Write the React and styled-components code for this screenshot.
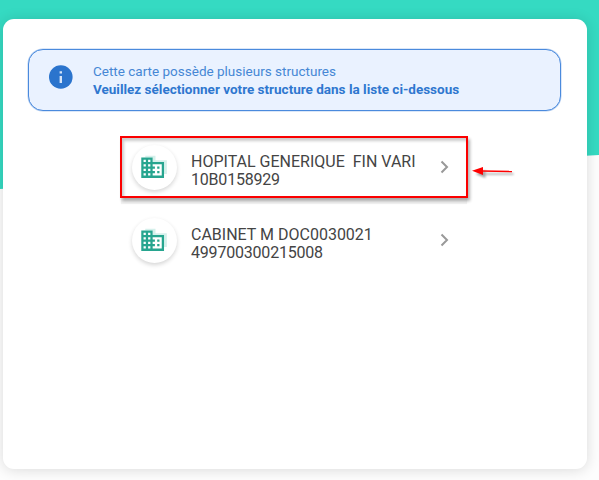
import React from "react";
import styled, { createGlobalStyle } from "styled-components";

const GlobalStyle = createGlobalStyle`
  * { box-sizing: border-box; }
  body { margin: 0; overflow: hidden; font-family: Roboto, "Liberation Sans", sans-serif; }
`;

const Page = styled.main`
  display: grid;
  width: 599px;
  height: 480px;
  overflow: hidden;
  background: #fdfdfd;
`;

const Backdrop = styled.div`
  grid-area: 1 / 1;
  height: 190px;
  background: #35dac2;
  clip-path: polygon(0 0, 100% 0, 100% 155px, 0 189px);
`;

const Card = styled.section`
  grid-area: 1 / 1;
  position: relative;
  width: 584px;
  height: 450px;
  margin: 19px 0 0 3px;
  padding: 30px 25px;
  border-radius: 11px;
  background: #fff;
  box-shadow: 0 1px 14px rgba(0, 0, 0, 0.14);
`;

const Notice = styled.div`
  display: flex;
  width: 532.5px;
  height: 62px;
  margin-left: 0.4px;
  padding: 13px 18.6px;
  gap: 19px;
  border: 1px solid #4a8add;
  box-shadow: 0 0 0 0.5px rgba(74, 138, 221, 0.4);
  border-radius: 15px;
  background: #eaf2ff;
`;

const InfoIcon = styled.svg`
  width: 26px;
  height: 26px;
  flex: none;
`;

const NoticeText = styled.div`
  margin-top: -1px;
  font-size: 13.5px;
  line-height: 18px;
  white-space: nowrap;
`;

const NoticeLine = styled.div`
  color: #4687d5;
`;

const NoticeStrong = styled(NoticeLine)`
  font-weight: 700;
  color: #2f77cf;
`;

const List = styled.div`
  display: flex;
  flex-direction: column;
  width: 348px;
  margin: 25px 0 0 92px;
  gap: 11px;
`;

const Row = styled.div`
  display: flex;
  align-items: center;
  height: 62px;
  padding: 1px 10px 0 10px;
  border: 2px solid ${(p) => (p.$highlighted ? "#fb0000" : "transparent")};
  box-shadow: ${(p) =>
    p.$highlighted
      ? "2px 3px 3px rgba(0,0,0,.3), inset 2px 3px 3px rgba(0,0,0,.2), 0 7px 1px -1px rgba(0,0,0,.05)"
      : "none"};
`;

const Avatar = styled.div`
  display: grid;
  place-items: center;
  width: 45px;
  height: 45px;
  flex: none;
  border-radius: 50%;
  background: #fff;
  box-shadow: 0 2px 4px rgba(0, 0, 0, 0.17);
`;

const Building = styled.svg`
  width: 27.3px;
  height: 27.3px;
  margin-left: -3px;
  margin-top: 1px;
  overflow: visible;
`;

const Label = styled.div`
  flex: 1;
  margin: 7px 0 0 14px;
  font-size: 16px;
  line-height: 18px;
  color: #444;
  white-space: pre;
`;

const StructureName = styled.div``;

const StructureId = styled.div`
  letter-spacing: -0.2px;
`;

const Chevron = styled.svg`
  width: 9px;
  height: 14px;
  margin: -1px 7px 0 0;
  flex: none;
`;

const Arrow = styled.svg`
  position: absolute;
  left: 467px;
  top: 144px;
  width: 50px;
  height: 18px;
`;

const ArrowShadow = styled.g`
  filter: blur(0.8px);
  opacity: 0.35;
`;

const structures = [
  { name: "HOPITAL GENERIQUE  FIN VARI", id: "10B0158929", highlighted: true },
  { name: "CABINET M DOC0030021", id: "499700300215008" },
];

function BuildingIcon() {
  return (
    <Building viewBox="0 0 24 24">
      <path d="M5.500 1.500H14.500v4H24.500V17.500H5.500z" fill="#d5f0eb" />
      <path d="M2 3h10v4h10v14H2z" fill="#fff" />
      <path
        fill="#27a58f"
        d="M12 7V3H2v18h20V7H12zM6 19H4v-2h2v2zm0-4H4v-2h2v2zm0-4H4V9h2v2zm0-4H4V5h2v2zm4 12H8v-2h2v2zm0-4H8v-2h2v2zm0-4H8V9h2v2zm0-4H8V5h2v2zm10 12h-8v-2h2v-2h-2v-2h2v-2h-2V9h8v10zm-2-8h-2v2h2v-2zm0 4h-2v2h2v-2z"
      />
    </Building>
  );
}

function StructureRow({ name, id, highlighted }) {
  return (
    <Row $highlighted={highlighted}>
      <Avatar>
        <BuildingIcon />
      </Avatar>
      <Label>
        <StructureName>{name}</StructureName>
        <StructureId>{id}</StructureId>
      </Label>
      <Chevron viewBox="0 0 9 14">
        <path d="M1.500 1.500 7 7l-5.500 5.500" fill="none" stroke="#999" strokeWidth="2" />
      </Chevron>
    </Row>
  );
}

export default function App() {
  return (
    <>
      <GlobalStyle />
      <Page>
        <Backdrop />
        <Card>
          <Notice>
            <InfoIcon viewBox="0 0 26 26">
              <circle cx="12.800" cy="14" r="11.800" fill="#2b74cd" />
              <path d="M11.600 8.200h2.400v2.400h-2.400zM11.600 13h2.400v7h-2.400z" fill="#d5e4f8" />
            </InfoIcon>
            <NoticeText>
              <NoticeLine>Cette carte possède plusieurs structures</NoticeLine>
              <NoticeStrong>Veuillez sélectionner votre structure dans la liste ci-dessous</NoticeStrong>
            </NoticeText>
          </Notice>
          <List>
            {structures.map((s) => (
              <StructureRow key={s.id} {...s} />
            ))}
          </List>
          <Arrow viewBox="0 0 50 18">
            <ArrowShadow transform="translate(2.500 3)">
              <path d="M12 8h29" stroke="#000" strokeWidth="1.500" />
              <path d="M3 8 13 4v8z" />
            </ArrowShadow>
            <path d="M12 8l30 .5" stroke="#f00" strokeWidth="1.500" />
            <path d="M2 7.700 13 4v8z" fill="#f00" />
          </Arrow>
        </Card>
      </Page>
    </>
  );
}
